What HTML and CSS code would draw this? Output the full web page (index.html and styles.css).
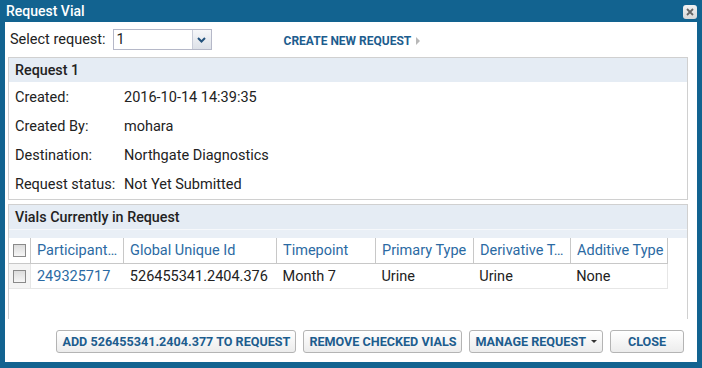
FILE: index.html
```html
<!DOCTYPE html>
<html>
<head>
    <title>Request Vial</title>
    <link rel="stylesheet" href="styles.css">
</head>
<body>
    <div class="dialog">
        <div class="title-bar">
            <span class="title">Request Vial</span>
            <span class="close-icon">
                <svg width="10" height="10" viewBox="0 0 10 10"><path d="M2 2 L8 8 M8 2 L2 8" stroke="#666" stroke-width="1.8"/></svg>
            </span>
        </div>
        <div class="dialog-body">
            <div class="select-row">
                <span class="select-label">Select request:</span>
                <div class="select-box">
                    <span class="select-value">1</span>
                    <span class="select-arrow">
                        <svg width="9" height="6" viewBox="0 0 9 6"><path d="M1 1 L4.5 4.5 L8 1" stroke="#23527c" stroke-width="2" fill="none"/></svg>
                    </span>
                </div>
                <a class="create-link">CREATE NEW REQUEST <span class="tri"></span></a>
            </div>

            <div class="panel">
                <div class="panel-header">Request 1</div>
                <div class="info">
                    <div class="info-row"><span class="info-label">Created:</span><span>2016-10-14 14:39:35</span></div>
                    <div class="info-row"><span class="info-label">Created By:</span><span>mohara</span></div>
                    <div class="info-row"><span class="info-label">Destination:</span><span>Northgate Diagnostics</span></div>
                    <div class="info-row"><span class="info-label">Request status:</span><span>Not Yet Submitted</span></div>
                </div>
            </div>

            <div class="panel vials">
                <div class="panel-header">Vials Currently in Request</div>
                <div class="toolbar"></div>
                <div class="grid">
                    <div class="grid-row grid-head">
                        <div class="cell cb"><span class="checkbox"></span></div>
                        <div class="cell c1">Participant…</div>
                        <div class="cell c2">Global Unique Id</div>
                        <div class="cell c3">Timepoint</div>
                        <div class="cell c4">Primary Type</div>
                        <div class="cell c5">Derivative T…</div>
                        <div class="cell c6">Additive Type</div>
                    </div>
                    <div class="grid-row grid-data">
                        <div class="cell cb"><span class="checkbox"></span></div>
                        <div class="cell c1 link">249325717</div>
                        <div class="cell c2">526455341.2404.376</div>
                        <div class="cell c3">Month 7</div>
                        <div class="cell c4">Urine</div>
                        <div class="cell c5">Urine</div>
                        <div class="cell c6">None</div>
                    </div>
                </div>
            </div>

            <div class="buttons">
                <button class="btn">ADD 526455341.2404.377 TO REQUEST</button>
                <button class="btn">REMOVE CHECKED VIALS</button>
                <button class="btn">MANAGE REQUEST <span class="caret"></span></button>
                <button class="btn close-btn">CLOSE</button>
            </div>
        </div>
    </div>
</body>
</html>
```

FILE: styles.css
```css
body {
    margin: 0;
    font-family: Roboto, "Liberation Sans", sans-serif;
    font-size: 14.5px;
    color: #222;
}
.dialog {
    width: 702px;
    height: 368px;
    box-sizing: border-box;
    background-color: #126390;
    padding: 0 5px 6px 5px;
    display: flex;
    flex-direction: column;
}
.title-bar {
    height: 22px;
    display: flex;
    align-items: center;
    justify-content: space-between;
    padding-left: 1px;
}
.title {
    color: #fff;
    font-size: 14px;
    font-weight: 500;
}
.close-icon {
    width: 14px;
    height: 14px;
    background: linear-gradient(#f2f2f2, #d8d8d8);
    border-radius: 3px;
    display: flex;
    align-items: center;
    justify-content: center;
    margin-top: 1px;
}
.dialog-body {
    flex: 1;
    background: #fff;
    display: flex;
    flex-direction: column;
    padding: 0 9px 0 3px;
}
.select-row {
    height: 35px;
    display: flex;
    align-items: center;
    padding-left: 2px;
}
.select-label {
    margin-right: 7px;
}
.select-box {
    width: 97px;
    height: 19px;
    border: 1px solid #b5b8c8;
    display: flex;
    align-items: center;
    justify-content: space-between;
}
.select-value {
    padding-left: 3px;
    color: #222;
}
.select-arrow {
    width: 18px;
    height: 19px;
    border-left: 1px solid #c8ccd8;
    background: linear-gradient(#f6f7f9, #dde1e8);
    display: flex;
    align-items: center;
    justify-content: center;
}
.create-link {
    margin-left: 72px;
    font-size: 12px;
    font-weight: bold;
    color: #1d5d8e;
    display: flex;
    align-items: center;
    margin-top: 2px;
}
.tri {
    display: inline-block;
    width: 0;
    height: 0;
    border-top: 4px solid transparent;
    border-bottom: 4px solid transparent;
    border-left: 4px solid #b8b8b8;
    margin-left: 5px;
}
.panel {
    border: 1px solid #d0d0d0;
}
.panel-header {
    height: 24px;
    background: #e5ecf4;
    display: flex;
    align-items: center;
    padding-left: 6px;
    font-size: 14.3px;
    font-weight: 500;
    color: #222;
}
.info {
    padding: 1px 0 0 6px;
}
.info-row {
    height: 29px;
    display: flex;
    align-items: center;
}
.info-label {
    width: 109px;
}
.vials {
    margin-top: 4px;
    border-bottom: none;
    height: 114px;
}
.toolbar {
    height: 8px;
    background: #e9eff6;
    border-top: 1px solid #f6f8fb;
}
.grid {
    width: 659px;
}
.grid-row {
    display: flex;
}
.grid-head {
    height: 25px;
    border-bottom: 1px solid #c8c8c8;
    color: #2b6aa3;
}
.grid-data {
    height: 24px;
    border-bottom: 1px solid #e6e6e6;
    border-right: 1px solid #e6e6e6;
}
.cell {
    display: flex;
    align-items: center;
    padding-left: 6px;
    box-sizing: border-box;
    white-space: nowrap;
    overflow: hidden;
}
.grid-head .cell {
    border-right: 1px solid #c8c8c8;
}
.cb {
    width: 22px;
    padding-left: 4px;
}
.grid-data .cb {
    background: #f4f4f4;
    border-right: 1px solid #e6e6e6;
}
.c1 { width: 93px; }
.c2 { width: 153px; }
.c3 { width: 99px; }
.c4 { width: 98px; }
.c5 { width: 97px; }
.c6 { width: 97px; }
.link {
    color: #2b6aa3;
}
.checkbox {
    width: 11px;
    height: 11px;
    border: 1px solid #8a8a8a;
    background: linear-gradient(#dcdcdc, #f6f6f6);
    box-sizing: content-box;
}
.buttons {
    display: flex;
    justify-content: flex-end;
    gap: 7px;
    margin-top: 11px;
    padding-right: 4px;
}
.btn {
    height: 23px;
    border: 1px solid #b4b4b4;
    border-radius: 3px;
    background: linear-gradient(#ffffff, #ececec);
    font-family: Roboto, "Liberation Sans", sans-serif;
    font-size: 12.6px;
    font-weight: bold;
    color: #1d5d8e;
    padding: 0 5px;
    display: flex;
    align-items: center;
}
.caret {
    display: inline-block;
    width: 0;
    height: 0;
    border-left: 3px solid transparent;
    border-right: 3px solid transparent;
    border-top: 3px solid #333;
    margin-left: 5px;
}
.close-btn {
    width: 74px;
    justify-content: center;
}
```
